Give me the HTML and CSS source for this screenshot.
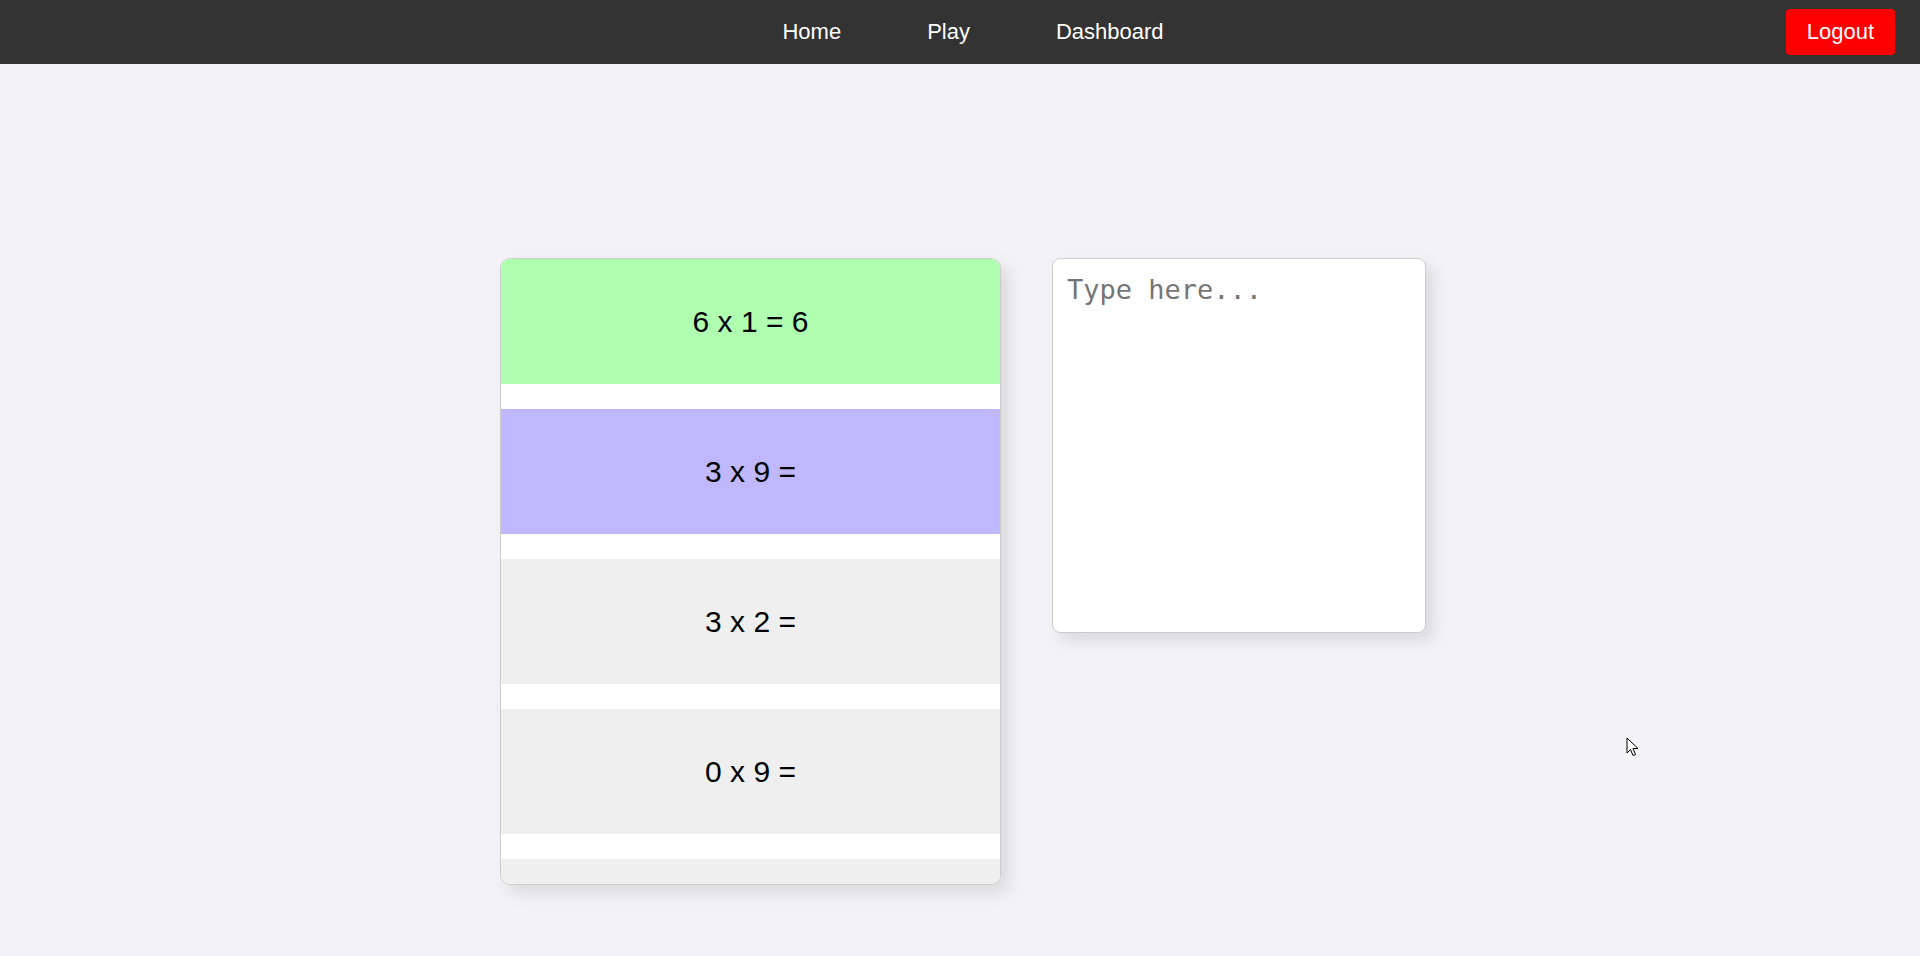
FILE: index.html
```html
<!DOCTYPE html>
<html lang="en">
<head>
<meta charset="utf-8">
<title>Times Tables</title>
<link rel="stylesheet" href="styles.css">
</head>
<body>
<nav class="navbar">
  <div class="nav-links">
    <a class="nav-link" href="#">Home</a>
    <a class="nav-link" href="#">Play</a>
    <a class="nav-link" href="#">Dashboard</a>
  </div>
  <button class="logout-btn">Logout</button>
</nav>
<main class="game">
  <div class="question-list">
    <div class="question correct">6 x 1 = 6</div>
    <div class="question current">3 x 9 =</div>
    <div class="question">3 x 2 =</div>
    <div class="question">0 x 9 =</div>
    <div class="question"></div>
  </div>
  <textarea class="answer-box" placeholder="Type here..."></textarea>
</main>
<svg class="cursor" width="14" height="22" viewBox="0 0 14 22"><path d="M1 1 L1 16 L4.5 12.5 L7 18.5 L9.5 17.5 L7 11.5 L12 11.5 Z" fill="#fff" stroke="#000" stroke-width="1"/></svg>
</body>
</html>
```
FILE: styles.css
```css
html, body {
  margin: 0;
  padding: 0;
}
body {
  background: #f3f3f7;
  font-family: "Liberation Sans", Arial, sans-serif;
  height: 956px;
  overflow: hidden;
}
.navbar {
  height: 64px;
  background: #333333;
  display: flex;
  align-items: center;
  justify-content: center;
  position: relative;
}
.nav-links {
  display: flex;
  gap: 86px;
  margin-left: 26px;
}
.nav-link {
  color: #ffffff;
  text-decoration: none;
  font-size: 22px;
  line-height: 26px;
}
.logout-btn {
  position: absolute;
  right: 25px;
  top: 9px;
  width: 109px;
  height: 46px;
  background: #ff0000;
  color: #ffffff;
  border: none;
  border-radius: 4px;
  font-family: "Liberation Sans", Arial, sans-serif;
  font-size: 22px;
  padding: 0;
}
.game {
  display: flex;
  justify-content: center;
  align-items: flex-start;
  gap: 51px;
  padding-top: 194px;
  padding-left: 6px;
}
.question-list {
  width: 499px;
  height: 625px;
  background: #ffffff;
  border: 1px solid #cccccc;
  border-radius: 10px;
  overflow: hidden;
  box-shadow: 8px 8px 16px rgba(0, 0, 0, 0.1);
  display: flex;
  flex-direction: column;
  gap: 25px;
}
.question {
  flex: 0 0 125px;
  height: 125px;
  background: #efefef;
  display: flex;
  align-items: center;
  justify-content: center;
  font-size: 30px;
  color: #000000;
}
.question.correct {
  background: #b0ffb0;
}
.question.current {
  background: #c0b8ff;
}
.answer-box {
  width: 374px;
  height: 375px;
  box-sizing: border-box;
  border: 1px solid #cccccc;
  border-radius: 8px;
  background: #ffffff;
  box-shadow: 8px 8px 16px rgba(0, 0, 0, 0.1);
  padding: 15px 14px;
  font-family: "DejaVu Sans Mono", monospace;
  font-size: 27px;
  resize: none;
  outline: none;
}
.answer-box::placeholder {
  color: #757575;
}
.cursor {
  position: absolute;
  left: 1626px;
  top: 737px;
}
```
